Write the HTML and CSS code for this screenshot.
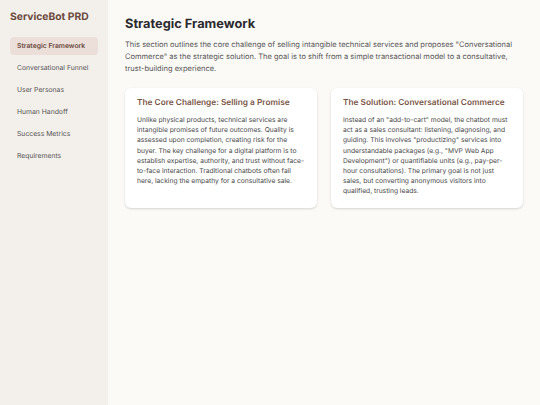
FILE: index.html
```html
<!DOCTYPE html>
<html>
<head>
<meta charset="utf-8">
<link rel="stylesheet" href="styles.css">
</head>
<body>
<div class="app">
  <aside class="sidebar">
    <div class="brand">ServiceBot PRD</div>
    <nav class="nav">
      <a class="nav-item active">Strategic Framework</a>
      <a class="nav-item">Conversational Funnel</a>
      <a class="nav-item">User Personas</a>
      <a class="nav-item">Human Handoff</a>
      <a class="nav-item">Success Metrics</a>
      <a class="nav-item">Requirements</a>
    </nav>
  </aside>
  <main class="main">
    <h1 class="title">Strategic Framework</h1>
    <p class="intro">This section outlines the core challenge of selling intangible technical services and proposes "Conversational Commerce" as the strategic solution. The goal is to shift from a simple transactional model to a consultative, trust-building experience.</p>
    <div class="cards">
      <section class="card">
        <h2 class="card-title">The Core Challenge: Selling a Promise</h2>
        <p class="card-text">Unlike physical products, technical services are intangible promises of future outcomes. Quality is assessed upon completion, creating risk for the buyer. The key challenge for a digital platform is to establish expertise, authority, and trust without face-to-face interaction. Traditional chatbots often fail here, lacking the empathy for a consultative sale.</p>
      </section>
      <section class="card">
        <h2 class="card-title">The Solution: Conversational Commerce</h2>
        <p class="card-text">Instead of an "add-to-cart" model, the chatbot must act as a sales consultant: listening, diagnosing, and guiding. This involves "productizing" services into understandable packages (e.g., "MVP Web App Development") or quantifiable units (e.g., pay-per-hour consultations). The primary goal is not just sales, but converting anonymous visitors into qualified, trusting leads.</p>
      </section>
    </div>
  </main>
</div>
</body>
</html>
```

FILE: styles.css
```css
* { box-sizing: border-box; }
html, body { margin: 0; padding: 0; }
body {
  font-family: Inter, "Noto Sans", sans-serif;
  background: #fcfaf7;
  color: #444444;
  text-rendering: geometricPrecision;
}
.app {
  display: flex;
  width: 540px;
  height: 405px;
}
.sidebar {
  width: 108px;
  flex: none;
  background: #f3efeb;
  padding: 10px 10px;
}
.brand {
  font-size: 10.3px;
  font-weight: 700;
  color: #6b4a3e;
  line-height: 14px;
  margin-bottom: 13px;
}
.nav {
  display: flex;
  flex-direction: column;
  gap: 4px;
}
.nav-item {
  display: block;
  font-size: 6.8px;
  line-height: 10px;
  padding: 4px 7px;
  height: 18px;
  border-radius: 4px;
  color: #555555;
  white-space: nowrap;
}
.nav-item.active {
  background: #ecdfda;
  color: #6b4a3e;
  font-weight: 600;
}
.main {
  flex: 1;
  padding: 16px 17px;
}
.title {
  margin: 0;
  font-size: 12.8px;
  line-height: 17px;
  font-weight: 700;
  color: #2a2a2e;
}
.intro {
  margin: 6px 0 0;
  font-size: 7.5px;
  line-height: 12px;
  color: #555555;
}
.cards {
  display: grid;
  grid-template-columns: 1fr 1fr;
  gap: 14px;
  margin-top: 13px;
}
.card {
  background: #ffffff;
  border-radius: 6px;
  box-shadow: 0 1px 3px rgba(0,0,0,0.1), 0 1px 2px rgba(0,0,0,0.06);
  padding: 9px 12px 11px;
}
.card-title {
  margin: 0;
  font-size: 8.3px;
  line-height: 12px;
  font-weight: 600;
  color: #7a5646;
}
.card-text {
  margin: 6px 0 0;
  font-size: 6.7px;
  line-height: 10.2px;
  color: #474747;
}
```
